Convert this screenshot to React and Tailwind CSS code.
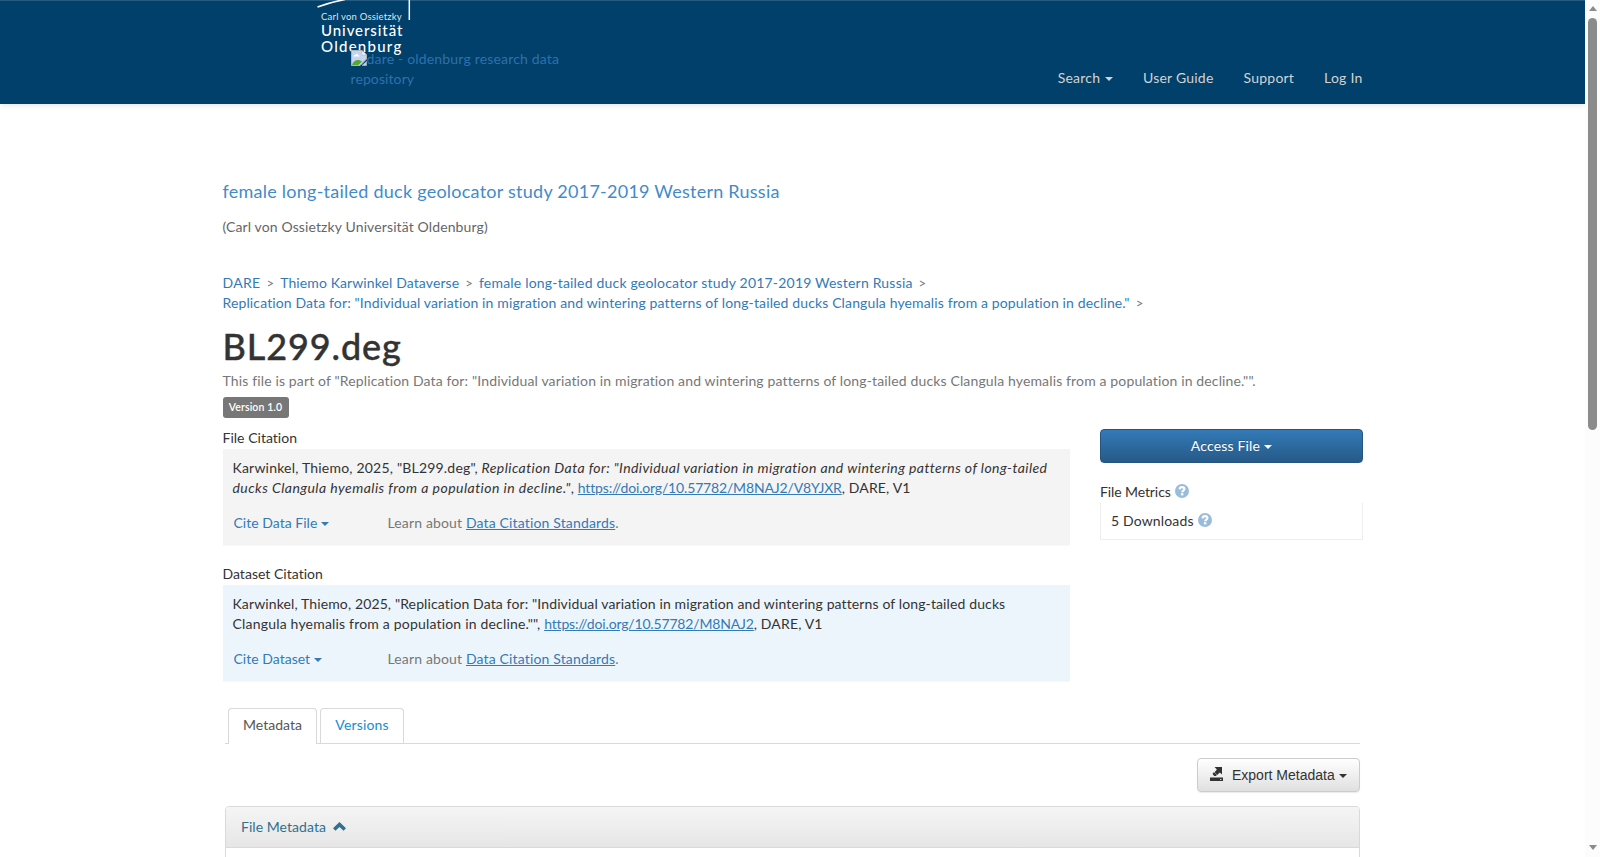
import React from 'react'

const Caret = ({ className = '' }) => (
  <span className={`inline-block align-middle border-x-4 border-x-transparent border-t-4 border-t-current ${className}`} />
)

const HelpIcon = () => (
  <svg className="inline-block w-[14px] h-[14px] ml-[4px] -mt-px shrink-0" viewBox="0 0 14 14" aria-hidden>
    <circle cx="7" cy="7" r="7" fill="#99bcdb" />
    <path d="M4.600 5.400C4.700 3.900 5.600 3.200 7 3.200c1.500 0 2.400.7 2.400 1.900 0 1.500-2.200 1.400-2.200 3.100" fill="none" stroke="#fff" strokeWidth="2.200" />
    <path d="M5.900 9.200h2.500v2.200H5.900z" fill="#fff" />
  </svg>
)

const BrokenImageIcon = () => (
  <svg className="w-4 h-4 mt-px shrink-0" viewBox="0 0 16 16" aria-hidden>
    <path d="M.5.5h10.500l4.500 4.500v4L9 15.500H.5z" fill="#c3d4f5" stroke="#b4b4b4" />
    <path d="M2.500 6.500c0-1.300 1-1.800 1.800-1.500C4.700 3.600 7 3.700 7.300 5.200c1 0 1.200.6 1.200 1.300z" fill="#fff" />
    <path d="M1 15c1-3.500 3.500-5 6-5 1.500 0 3 .6 4 1.500L7.500 15z" fill="#56a832" />
    <path d="M11 .5V5h4.500z" fill="#fff" stroke="#b4b4b4" strokeWidth=".7" />
    <path d="M15.500 11.500v4h-4.500z" fill="#c3d4f5" stroke="#b4b4b4" strokeWidth=".7" />
  </svg>
)

const ExportIcon = () => (
  <svg className="w-[14px] h-[14px] -mt-[2px]" viewBox="0 0 14 14" aria-hidden>
    <path d="M0 10.500h13v3.500H0z" fill="#333" />
    <path d="M10 12h1.500v.7H10z" fill="#fff" />
    <path d="M4.500 0H12v7.500L9.800 5.600 7.200 8 4.600 5.300 6.900 2.600z" fill="#333" />
    <path d="M2.700 6.300 4 5.200 7 8 5.700 9H4.200C3.400 8.200 2.700 7.500 2.700 6.300z" fill="#333" />
  </svg>
)

const ChevronUp = () => (
  <svg className="w-[13px] h-[9px]" viewBox="0 0 13 9" aria-hidden>
    <path d="M6.500 0 13 6.200 10.500 8.700 6.500 4.900 2.500 8.700 0 6.200z" fill="#31708f" />
  </svg>
)

const UniLogo = () => (
  <div className="relative w-[100px] h-[60px] text-white whitespace-nowrap">
    <svg className="absolute left-0 top-0 w-[100px] h-[24px]" viewBox="0 0 100 24" fill="none" stroke="#fff" aria-hidden>
      <path d="M.5 7C9 3.800 18 1.300 28-.5" strokeWidth="1.500" />
      <path d="M92.300 0v20" strokeWidth="1.500" />
    </svg>
    <div className="pt-[11px] pl-[4.500px]">
      <div className="text-[9.500px] leading-[12px] tracking-[0.2px] text-[#dbe5ec]">Carl von Ossietzky</div>
      <div className="text-[15px] leading-[15.500px] font-medium tracking-[0.92px]">Universität</div>
      <div className="text-[15px] leading-[15.500px] font-medium tracking-[1.250px]">Oldenburg</div>
    </div>
  </div>
)

const Header = () => (
  <header className="h-[104px] bg-[#00406b] border-t border-[#265c81] shadow-[0_1px_6px_rgba(0,0,0,0.12)]">
    <div className="w-[1140px] mx-auto flex justify-between">
      <div className="relative w-[400px]">
        <div className="absolute left-[94px] -top-px"><UniLogo /></div>
        <div className="absolute left-[128px] top-[48px] w-[230px] text-[#2f70ab] leading-5">
          <div className="flex whitespace-nowrap tracking-[0.18px]">
            <BrokenImageIcon />
            dare - oldenburg research data
          </div>
          <div className="tracking-[0.1px]">repository</div>
        </div>
      </div>
      <nav className="flex pt-[67px] gap-[30px] text-[#d3d3d3] leading-5 tracking-[0.22px] whitespace-nowrap">
        <span>Search <Caret className="ml-px" /></span>
        <span>User Guide</span>
        <span>Support</span>
        <span>Log In</span>
      </nav>
    </div>
  </header>
)

const Crumb = ({ className = '', children }) => (
  <>
    <a className={`text-[#337ab7] ${className}`}>{children}</a>
    <span className="text-[#777] text-[13px] mx-[6px]">&gt;</span>
  </>
)

const Citation = ({ title, cite, boxClass, children }) => (
  <section className="h-[136px]">
    <div className="h-[20px] leading-5 tracking-[0.02px]">{title}</div>
    <div className={`h-[97px] mt-[1px] px-[10px] pt-[9px] border-b ${boxClass}`}>
      <div className="leading-5 whitespace-nowrap">{children}</div>
      <div className="flex mt-[15px] leading-5 pl-[1px]">
        <a className="w-[154px] text-[#337ab7] tracking-[0.02px]">{cite} <Caret /></a>
        <span className="text-[#777]">
          Learn about <a className="text-[#337ab7] underline">Data Citation Standards</a>.
        </span>
      </div>
    </div>
  </section>
)

const DoiLink = ({ children }) => (
  <a className="text-[#337ab7] underline tracking-[-0.165px]">{children}</a>
)

const Sidebar = () => (
  <aside className="w-[262.5px]">
    <button className="block w-full h-[34px] pb-[2px] rounded-[4px] border border-[#245580] bg-linear-to-b from-[#337ab7] to-[#265a88] text-white [text-shadow:0_-1px_0_rgba(0,0,0,0.2)]">
      Access File <Caret />
    </button>
    <div className="flex items-center h-5 mt-[18px] tracking-[-0.1px]">File Metrics<HelpIcon /></div>
    <div className="h-[37px] mt-[2px] px-[10px] pb-[2px] border border-t-0 border-[#eee] flex items-center">
      5 Downloads<HelpIcon />
    </div>
  </aside>
)

const Tabs = () => (
  <div className="flex h-[36px] pl-[3px] gap-[3px] border-b border-[#d9d9d9]">
    <div className="w-[89px] h-[36px] rounded-t-[4px] border border-b-0 border-[#d9d9d9] bg-white text-[#555] text-center leading-[32px] tracking-[0.05px]">Metadata</div>
    <div className="w-[84px] h-[35px] rounded-t-[4px] border border-b-0 border-[#d9d9d9] bg-white text-[#168dd0] text-center leading-[32px]">Versions</div>
  </div>
)

const Scrollbar = () => (
  <div className="w-[15px] h-full bg-[#fcfcfc] flex flex-col items-center justify-between">
    <div className="flex flex-col items-center">
      <span className="mt-[6px] border-x-[4.500px] border-x-transparent border-b-[5px] border-b-[#8b8b8b]" />
      <span className="mt-[7px] w-[9px] h-[412px] rounded-full bg-[#8b8b8b]" />
    </div>
    <span className="mb-[7px] border-x-[4.500px] border-x-transparent border-t-[5px] border-t-[#8b8b8b]" />
  </div>
)

const App = () => {
  return (
    <div className="w-[1600px] h-[857px] overflow-hidden flex bg-white text-[#333] text-[14px] tracking-[0.15px] font-['Lato',sans-serif]">
      <div className="w-[1585px]">
        <Header />
        <main className="w-[1140px] mx-auto">
          <div className="pt-[75px] text-[18px] leading-[25px] tracking-[0.245px] text-[#428bca]">
            female long-tailed duck geolocator study 2017-2019 Western Russia
          </div>
          <div className="mt-[13px] leading-5 tracking-[0.12px] text-[#666]">(Carl von Ossietzky Universität Oldenburg)</div>
          <div className="mt-[36px] leading-5 whitespace-nowrap">
            <div>
              <Crumb className="tracking-[0.3px]">DARE</Crumb>
              <Crumb className="tracking-[0.11px]">Thiemo Karwinkel Dataverse</Crumb>
              <Crumb className="tracking-[0.195px]">female long-tailed duck geolocator study 2017-2019 Western Russia</Crumb>
            </div>
            <div>
              <Crumb className="tracking-[0.128px]">Replication Data for: "Individual variation in migration and wintering patterns of long-tailed ducks Clangula hyemalis from a population in decline."</Crumb>
            </div>
          </div>
          <h1 className="mt-[13px] text-[36px] leading-[40px] font-medium tracking-[0.9px] [-webkit-text-stroke:0.4px_#333]">BL299.deg</h1>
          <div className="mt-[5px] leading-5 tracking-[0.138px] text-[#777] whitespace-nowrap">
            This file is part of "Replication Data for: "Individual variation in migration and wintering patterns of long-tailed ducks Clangula hyemalis from a population in decline."".
          </div>
          <div className="mt-[6px] w-[66px] h-[21px] rounded-[3px] bg-[#777] text-white text-[10.500px] leading-[20px] font-semibold tracking-[0.1px] text-center">Version 1.0</div>

          <div className="mt-[11px] flex gap-[30px]">
            <div className="w-[847.500px] -mt-[1px]">
              <Citation title="File Citation" cite="Cite Data File" boxClass="bg-[#f4f4f4] border-[#f8f8f8]">
                <span className="tracking-[0.2px]">Karwinkel, Thiemo, 2025, "BL299.deg", </span>
                <i className="tracking-[0.415px]">Replication Data for: "Individual variation in migration and wintering patterns of long-tailed</i><br />
                <i className="tracking-[0.46px]">ducks Clangula hyemalis from a population in decline."</i>, <DoiLink>https://doi.org/10.57782/M8NAJ2/V8YJXR</DoiLink>, DARE, V1
              </Citation>
              <Citation title="Dataset Citation" cite="Cite Dataset" boxClass="bg-[#edf5fc] border-[#f5f9fd]">
                <span className="tracking-[0.12px]">Karwinkel, Thiemo, 2025, "Replication Data for: "Individual variation in migration and wintering patterns of long-tailed ducks</span><br />
                <span className="tracking-[0.19px]">Clangula hyemalis from a population in decline."", </span>
                <DoiLink>https://doi.org/10.57782/M8NAJ2</DoiLink>, DARE, V1
              </Citation>
            </div>
            <Sidebar />
          </div>

          <div className="w-[1135px] ml-[2.500px] mt-[8px]">
            <Tabs />
            <div className="flex justify-end mt-[14px]">
              <button className="flex items-center w-[163px] h-[34px] pl-[12px] rounded-[4px] border border-[#ccc] bg-linear-to-b from-white to-[#e0e0e0] shadow-[0_1px_1px_rgba(0,0,0,0.08)] tracking-normal font-['Liberation_Sans',sans-serif] whitespace-nowrap">
                <ExportIcon />
                <span className="ml-[8px]">Export Metadata <Caret /></span>
              </button>
            </div>
            <div className="mt-[14px] h-[60px] rounded-t-[4px] border border-[#d9d9d9]">
              <div className="h-[41px] px-[15px] pb-[2px] flex items-center gap-[7px] rounded-t-[3px] border-b border-[#d9d9d9] bg-linear-to-b from-[#f5f5f5] to-[#e6e6e6] text-[#31708f] tracking-[0.05px]">
                File Metadata <ChevronUp />
              </div>
            </div>
          </div>
        </main>
      </div>
      <Scrollbar />
    </div>
  )
}

export default App
